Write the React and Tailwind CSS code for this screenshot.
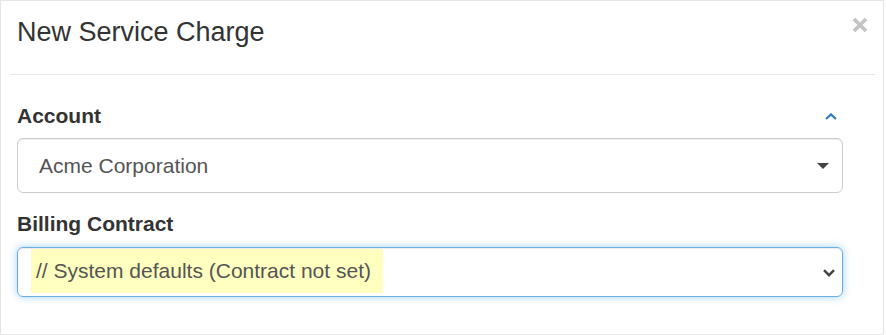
function CaretDown() {
    return (
        <svg width="12" height="6" viewBox="0 0 12 6" className="shrink-0">
            <path d="M0 0h12L6 6z" fill="#444" />
        </svg>
    );
}

function ChevronDown() {
    return (
        <svg width="12" height="8" viewBox="0 0 12 8" className="shrink-0">
            <path d="M1 1.2l5 5 5-5" fill="none" stroke="#444" strokeWidth="2.4" />
        </svg>
    );
}

function ChevronUp() {
    return (
        <svg width="12" height="7" viewBox="0 0 12 7" className="shrink-0">
            <path d="M1 6l5-4.6L11 6" fill="none" stroke="#337ab7" strokeWidth="2.2" />
        </svg>
    );
}

export default function App() {
    return (
        <div className="w-[884px] h-[335px] bg-white border border-[#e5e5e5] text-[#333] font-['Liberation_Sans',Arial,sans-serif]">
            {/* Modal header */}
            <div className="h-[73px] flex items-start justify-between pl-[16px] pr-[15px] pt-[16px]">
                <h4 className="text-[27px] leading-[30px] font-normal">New Service Charge</h4>
                <button>
                    <svg width="16" height="16" viewBox="0 0 16 16">
                        <path d="M2 2l12 12M14 2L2 14" stroke="#c4c4c4" strokeWidth="3.8" />
                    </svg>
                </button>
            </div>
            <div className="ml-[9px] mr-[8px] border-b border-[#e5e5e5]" />

            {/* Modal body */}
            <div className="pl-[16px] pr-[40px] pt-[26px]">
                <div className="flex items-center justify-between pr-[6px]">
                    <label className="text-[21px] leading-[30px] font-bold">Account</label>
                    <ChevronUp />
                </div>
                <div className="mt-[7px] h-[55px] flex items-center justify-between border border-[#ccc] rounded-[6px] pl-[21px] pr-[13px] shadow-[inset_0_1px_1px_rgba(0,0,0,0.075)]">
                    <span className="text-[21px] text-[#555]">Acme Corporation</span>
                    <CaretDown />
                </div>

                <label className="block mt-[16px] text-[21px] leading-[30px] font-bold">Billing Contract</label>
                <div className="mt-[8px] h-[50px] flex items-start justify-between border border-[#66afe9] rounded-[6px] pl-[13px] pr-[7px] pt-[1px] shadow-[0_0_8px_rgba(102,175,233,0.6),inset_0_1px_1px_rgba(0,0,0,0.075)]">
                    <span className="h-[44px] w-[352px] flex items-center pl-[5px] bg-[#ffffc0] text-[21px] text-[#555]">
                        // System defaults (Contract not set)
                    </span>
                    <div className="self-center">
                        <ChevronDown />
                    </div>
                </div>
            </div>
        </div>
    );
}
